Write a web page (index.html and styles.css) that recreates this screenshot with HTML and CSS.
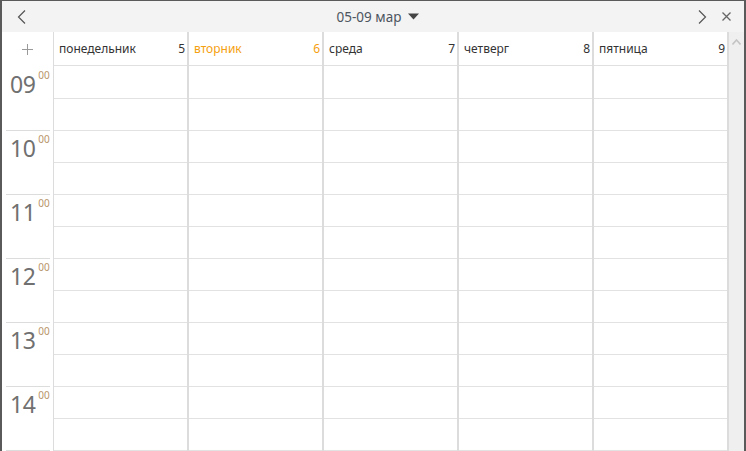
FILE: index.html
```html
<!DOCTYPE html>
<html lang="ru">
<head>
  <meta charset="UTF-8">
  <title>Календарь – неделя</title>
  <link rel="stylesheet" href="styles.css">
</head>
<body>

  <div class="window">
    <div class="topbar">
      <button class="nav-btn">
        <svg width="10" height="14" viewBox="0 0 10 14"><path d="M8 0.5 L1.5 7 L8 13.5" fill="none" stroke="#555" stroke-width="1.2"/></svg>
      </button>
      <div class="title">
        <span>05-09 мар</span>
        <svg width="11" height="7" viewBox="0 0 11 7"><path d="M0 0.5 H11 L5.5 6.5 Z" fill="#444"/></svg>
      </div>
      <button class="nav-btn">
        <svg width="10" height="14" viewBox="0 0 10 14"><path d="M2 0.5 L8.5 7 L2 13.5" fill="none" stroke="#555" stroke-width="1.2"/></svg>
      </button>
      <button class="close-btn">
        <svg width="9" height="9" viewBox="0 0 9 9"><path d="M0.5 0.5 L8.5 8.5 M8.5 0.5 L0.5 8.5" stroke="#666" stroke-width="1.3"/></svg>
      </button>
    </div>

    <div class="grid">
      <div class="times">
        <div class="corner">
          <svg width="11" height="11" viewBox="0 0 11 11"><path d="M5.5 0 V11 M0 5.5 H11" stroke="#9a9a9a" stroke-width="1"/></svg>
        </div>
        <div class="times-body" id="times"></div>
      </div>
      <div class="days" id="days"></div>
      <div class="scrollbar">
        <svg width="9" height="6" viewBox="0 0 9 6"><path d="M0.5 5.5 L4.5 1 L8.5 5.5" fill="none" stroke="#c4c4c4" stroke-width="1.6"/></svg>
      </div>
    </div>
  </div>

  <script>
    const days = [
      { name: 'понедельник', num: 5 },
      { name: 'вторник', num: 6, today: true },
      { name: 'среда', num: 7 },
      { name: 'четверг', num: 8 },
      { name: 'пятница', num: 9 }
    ];
    const hours = ['09', '10', '11', '12', '13', '14'];

    const timesEl = document.getElementById('times');
    hours.forEach(h => {
      const block = document.createElement('div');
      block.className = 'hour';
      block.innerHTML = '<span class="hh">' + h + '</span><span class="mm">00</span>';
      timesEl.appendChild(block);
    });

    const daysEl = document.getElementById('days');
    days.forEach(d => {
      const col = document.createElement('div');
      col.className = 'day' + (d.today ? ' today' : '');
      let html = '<div class="day-head"><span>' + d.name + '</span><span>' + d.num + '</span></div><div class="day-body">';
      for (let i = 0; i < hours.length * 2; i++) html += '<div class="slot"></div>';
      col.innerHTML = html + '</div>';
      daysEl.appendChild(col);
    });
  </script>

</body>
</html>
```

FILE: styles.css
```css
* {
  box-sizing: border-box;
}

body {
  margin: 0;
  font-family: 'Noto Sans', 'Open Sans', sans-serif;
  background: #fff;
}

.window {
  width: 746px;
  height: 451px;
  border: 2px solid #5a5a5a;
  border-top-width: 1px;
  border-bottom: none;
  display: flex;
  flex-direction: column;
  overflow: hidden;
}

.topbar {
  height: 31px;
  flex-shrink: 0;
  background: #f3f3f3;
  display: flex;
  align-items: center;
  padding: 0 10px 0 12px;
}

.nav-btn,
.close-btn {
  border: none;
  background: none;
  padding: 0;
  width: 16px;
  height: 20px;
  display: flex;
  align-items: center;
  justify-content: center;
}

.title {
  flex: 1;
  display: flex;
  align-items: center;
  justify-content: center;
  gap: 7px;
  font-size: 13.5px;
  color: #4d5560;
  padding-left: 32px;
}

.close-btn {
  margin-left: 8px;
}

.grid {
  flex: 1;
  display: flex;
  overflow: hidden;
}

.times {
  width: 52px;
  flex-shrink: 0;
  border-right: 1px solid #dcdcdc;
}

.corner {
  height: 34px;
  display: flex;
  align-items: center;
  justify-content: center;
  padding-right: 1px;
}

.times-body {
  padding-top: 1px;
}

.hour {
  height: 64px;
  margin: 0 3px 0 4px;
  border-bottom: 1px solid #dcdcdc;
  padding: 5px 0 0 4px;
  display: flex;
  align-items: flex-start;
}

.hh {
  font-size: 23px;
  line-height: 24px;
  color: #707070;
  letter-spacing: -0.5px;
}

.mm {
  font-size: 10px;
  line-height: 10px;
  color: #b8946a;
  margin-left: 3px;
  margin-top: -2px;
}

.days {
  display: flex;
}

.day {
  width: 135px;
  border-right: 2px solid #dcdcdc;
}

.day-head {
  height: 34px;
  border-bottom: 1px solid #e0e0e0;
  display: flex;
  align-items: center;
  justify-content: space-between;
  padding: 0 2px 1px 5px;
  font-size: 12px;
  color: #333;
}

.day.today .day-head {
  color: #f5a00f;
}

.day-body {
  padding-top: 1px;
}

.slot {
  height: 32px;
  border-bottom: 1px solid #e2e2e2;
}

.scrollbar {
  flex: 1;
  background: #efefef;
  display: flex;
  justify-content: center;
  align-items: flex-start;
  padding-top: 7px;
}
```
